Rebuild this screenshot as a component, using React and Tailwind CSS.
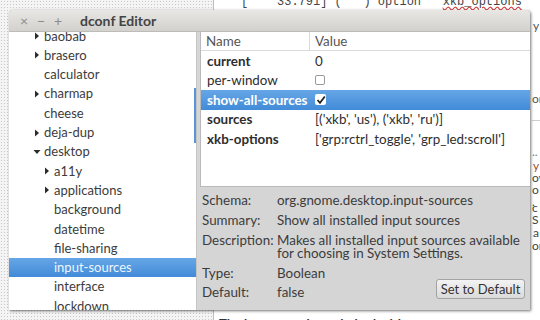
import React from "react";

const TREE = [
  { label: "baobab", level: 0, arrow: "right" },
  { label: "brasero", level: 0, arrow: "right" },
  { label: "calculator", level: 0 },
  { label: "charmap", level: 0, arrow: "right" },
  { label: "cheese", level: 0 },
  { label: "deja-dup", level: 0, arrow: "right" },
  { label: "desktop", level: 0, arrow: "down" },
  { label: "a11y", level: 1, arrow: "right" },
  { label: "applications", level: 1, arrow: "right" },
  { label: "background", level: 1 },
  { label: "datetime", level: 1 },
  { label: "file-sharing", level: 1 },
  { label: "input-sources", level: 1, selected: true },
  { label: "interface", level: 1 },
  { label: "lockdown", level: 1 },
];

const KEYS = [
  { name: "current", value: "0", bold: true },
  { name: "per-window", check: "off" },
  { name: "show-all-sources", check: "on", selected: true, bold: true },
  { name: "sources", value: "[('xkb', 'us'), ('xkb', 'ru')]", bold: true },
  { name: "xkb-options", value: "['grp:rctrl_toggle', 'grp_led:scroll']", bold: true },
];

function Arrow({ dir }) {
  if (dir === "down") {
    return (
      <svg width="8" height="8" viewBox="0 0 8 8" className="shrink-0">
        <path d="M0.5 2 L7.5 2 L4 6 Z" fill="#2b2b2b" />
      </svg>
    );
  }
  return (
    <svg width="8" height="8" viewBox="0 0 8 8" className="shrink-0">
      <path d="M2 0.5 L6 4 L2 7.5 Z" fill="#2b2b2b" />
    </svg>
  );
}

function TreeRow({ item }) {
  const pad = item.level === 0 ? "pl-[24px]" : "pl-[34px]";
  return (
    <div
      className={`flex items-center h-[19.3px] ${pad} ${
        item.selected
          ? "bg-gradient-to-b from-[#66a6e6] to-[#418bd8] text-[#eef5ff]"
          : "text-[#3c3c3c]"
      }`}
    >
      <div className="w-[11px] flex items-center">
        {item.arrow && <Arrow dir={item.arrow} />}
      </div>
      <span className="leading-none">{item.label}</span>
    </div>
  );
}

function Checkbox({ on }) {
  if (on) {
    return (
      <div className="w-[11px] h-[11px] bg-white rounded-[2px] flex items-center justify-center">
        <svg width="10" height="10" viewBox="0 0 10 10">
          <path d="M1.5 5 L4 7.8 L8.8 1.5" stroke="#222" strokeWidth="1.8" fill="none" />
        </svg>
      </div>
    );
  }
  return <div className="w-[10px] h-[10px] border border-[#9a9a9a] rounded-[2px] bg-white" />;
}

function KeyRow({ row }) {
  return (
    <div
      className={`flex items-center h-[19.5px] whitespace-nowrap ${
        row.selected
          ? "bg-gradient-to-b from-[#66a6e6] to-[#418bd8] text-white"
          : "text-[#2e2e2e]"
      }`}
    >
      <div className={`w-[109px] pl-[6px] ${row.bold ? "font-bold" : ""}`}>{row.name}</div>
      <div className="pl-[5px] flex items-center">
        {row.check ? <Checkbox on={row.check === "on"} /> : row.value}
      </div>
    </div>
  );
}

export default function App() {
  return (
    <div className="relative w-[540px] h-[320px] overflow-hidden bg-[#f4f4f4] bg-[radial-gradient(#c9c9c9_0.8px,transparent_0.9px)] bg-[size:3px_3px] font-['Lato',sans-serif] text-[13px]">
      {/* document page behind the window */}
      <div className="absolute left-[213px] top-0 right-0 bottom-0 bg-white border-l border-[#bdbdbd] text-[12px]">
        <div className="absolute top-[-7px] left-[27px] whitespace-nowrap font-['Liberation_Mono',monospace] text-[12px] text-[#444]">
          [&nbsp;&nbsp;&nbsp;&nbsp;33.791]&nbsp;(&nbsp;&nbsp;&nbsp;)&nbsp;option&nbsp;&nbsp;&nbsp;
          <span className="underline decoration-wavy decoration-[#d04040]">xkb_options</span>
          &nbsp;&nbsp;&nbsp;
          <span className="underline decoration-wavy decoration-[#d04040]">grp:rctrl_toggle</span>
        </div>
        <div className="absolute left-[319px] top-[17px] text-[#555]">y</div>
        <div className="absolute left-[318px] top-[90px] text-[#555]">or</div>
        <div className="absolute left-[318px] top-[120px] w-[10px] h-px bg-[#cfcfcf]" />
        <div className="absolute left-[318px] top-[143px] text-[#777]">..</div>
        <div className="absolute left-[319px] top-[157px] text-[#a0522d]">y</div>
        <div className="absolute left-[318px] top-[169px] text-[#444]">ow</div>
        <div className="absolute left-[318px] top-[181px] text-[#444]">o c</div>
        <div className="absolute left-[318px] top-[193px] text-[#444]">. S</div>
        <div className="absolute left-[319px] top-[224px] text-[#444]">a</div>
        <div className="absolute left-[318px] top-[237px] text-[#444]">on</div>
        <div className="absolute left-[5px] top-[315px] whitespace-nowrap font-bold text-[13px] text-[#333]">
          The layout can be switched with
        </div>
      </div>

      {/* dconf Editor window */}
      <div className="absolute left-[9px] top-[10px] w-[521px] h-[300px] flex flex-col rounded-t-[4px] bg-[#d6d6d6] shadow-[1px_1px_3px_rgba(0,0,0,0.55)] overflow-hidden">
        <div className="h-[22px] shrink-0 flex items-center bg-gradient-to-b from-[#e8e7e4] to-[#d2d1cd] border-b border-[#bdbcb8]">
          <div className="flex items-center text-[#8c8c8c] text-[14px] pl-[10px] gap-[7px] leading-none">
            <span className="w-[10px] text-center">×</span>
            <span className="w-[10px] text-center">−</span>
            <span className="w-[10px] text-center">+</span>
          </div>
          <span className="ml-[17px] font-bold text-[14px] text-[#444] leading-none">dconf Editor</span>
        </div>

        <div className="flex flex-1 min-h-0">
          {/* schema tree */}
          <div className="relative w-[188px] shrink-0 bg-white overflow-hidden border-r border-[#c4c4c4]">
            <div className="mt-[-5.6px]">
              {TREE.map((item) => (
                <TreeRow key={item.label} item={item} />
              ))}
            </div>
            <div className="absolute right-0 top-[56px] h-[55px] w-[2px] bg-[#5b95d8]" />
          </div>

          <div className="w-[3px] shrink-0 bg-[#d6d6d6]" />

          {/* keys + details */}
          <div className="flex-1 flex flex-col min-w-0 text-[13.4px]">
            <div className="h-[155px] shrink-0 bg-white border-l border-b border-[#b9b9b9]">
              <div className="flex h-[19px] items-center border-b border-[#dadada] text-[#555]">
                <div className="w-[109px] pl-[5px] border-r border-[#dadada] h-full flex items-center">Name</div>
                <div className="pl-[5px]">Value</div>
              </div>
              {KEYS.map((row) => (
                <KeyRow key={row.name} row={row} />
              ))}
            </div>

            <div className="flex-1 bg-[#d5d5d5] pl-[2px] pr-[5px] pt-[7px] leading-[13px] text-[#3c3c3c] whitespace-nowrap">
              <div className="grid grid-cols-[75px_1fr] gap-y-[7px]">
                <div>Schema:</div>
                <div>org.gnome.desktop.input-sources</div>
                <div>Summary:</div>
                <div>Show all installed input sources</div>
                <div>Description:</div>
                <div>
                  Makes all installed input sources available
                  <br />
                  for choosing in System Settings.
                </div>
                <div>Type:</div>
                <div>Boolean</div>
              </div>
              <div className="flex items-start justify-between mt-[6px]">
                <div className="flex">
                  <div className="w-[75px]">Default:</div>
                  <div>false</div>
                </div>
                <button className="h-[20px] w-[89px] rounded-[3px] border border-[#a3a3a3] bg-gradient-to-b from-[#f3f3f3] to-[#dadada] text-[13px] text-[#333] leading-none mt-[-7px]">
                  Set to Default
                </button>
              </div>
            </div>
          </div>
        </div>
      </div>
    </div>
  );
}
